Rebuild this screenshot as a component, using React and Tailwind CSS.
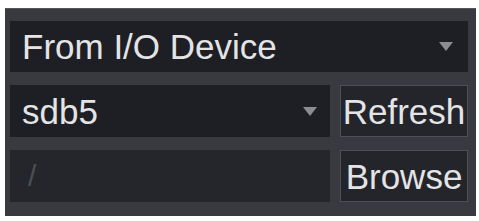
const Arrow = () => (
  <svg width="14" height="9" viewBox="0 0 14 9" className="shrink-0">
    <path d="M0 0 H14 L7 9 Z" fill="#8b8d93" />
  </svg>
);

export default function App() {
  return (
    <div
      className="w-[479px] h-[221px] bg-white pt-[8px] pl-[5px]"
      style={{ fontFamily: '"Liberation Sans", Arial, sans-serif' }}
    >
      <div className="w-[471px] h-[208px] bg-[#393a3f] border-t border-[#55565b] flex flex-col gap-[13px] pt-[12px] pl-[5px] pr-[8px] text-[35px] leading-none text-[#e4e4e6]">
        {/* source */}
        <div className="h-[51px] bg-[#1e1f24] flex items-center justify-between pl-[12px] pr-[15px]">
          <span>From I/O Device</span>
          <Arrow />
        </div>

        {/* device */}
        <div className="flex gap-[10px] h-[52px]">
          <div className="w-[320px] bg-[#1e1f24] flex items-center justify-between pl-[12px] pr-[13px]">
            <span>sdb5</span>
            <Arrow />
          </div>
          <button className="flex-1 bg-[#23252b] border border-[#4d4f56] flex items-center justify-center">
            Refresh
          </button>
        </div>

        {/* path */}
        <div className="flex gap-[10px] h-[52px]">
          <div className="w-[320px] bg-[#24262b] flex items-center pl-[18px] text-[#4c4e54] text-[30px]">
            /
          </div>
          <button className="flex-1 bg-[#23252b] border border-[#4d4f56] flex items-center justify-center">
            Browse
          </button>
        </div>
      </div>
    </div>
  );
}
